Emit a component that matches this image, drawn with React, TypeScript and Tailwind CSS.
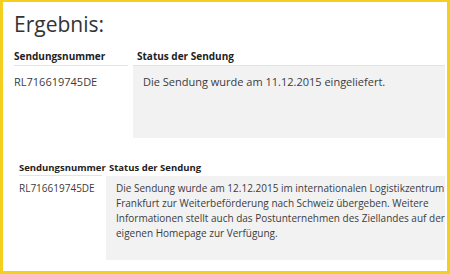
import { Fragment } from "react";

const RESULTS = [
  {
    nr: "RL716619745DE",
    status: "Die Sendung wurde am 11.12.2015 eingeliefert.",
  },
];

// Zeilen wie auf der Seite umbrochen
const DETAIL_LINES = [
  "Die Sendung wurde am 12.12.2015 im internationalen Logistikzentrum",
  "Frankfurt zur Weiterbeförderung nach Schweiz übergeben. Weitere",
  "Informationen stellt auch das Postunternehmen des Ziellandes auf der",
  "eigenen Homepage zur Verfügung.",
];

export default function App() {
  return (
    <div className="w-[450px] h-[274px] bg-[#f5cf1f] pt-[2px] pl-[3px] pr-[3px] pb-[3px]">
      <div className="h-full bg-white font-['Open_Sans',sans-serif] text-[#3c3c3c]">
        {/* erste Abfrage */}
        <div className="pl-[11px] pr-[2px] pt-[10px]">
          <h1 className="text-[21px] leading-[24px] text-[#333]">Ergebnis:</h1>
          <div className="mt-[13px] grid grid-cols-[114px_312px] gap-x-[5px]">
            <div className="border-b border-[#e4e4e4] pb-[2px] text-[10px] leading-[14px] font-bold text-[#222]">
              Sendungsnummer
            </div>
            <div className="border-b border-[#e4e4e4] pb-[2px] pl-[4px] text-[10px] leading-[14px] font-bold text-[#222]">
              Status der Sendung
            </div>
            {RESULTS.map((r) => (
              <Fragment key={r.nr}>
                <div className="pt-[8px] text-[11px] leading-[16px]">{r.nr}</div>
                <div className="h-[72px] bg-[#f2f2f2] pl-[10px] pt-[8px] text-[11px] leading-[16px]">
                  {r.status}
                </div>
              </Fragment>
            ))}
          </div>
        </div>

        {/* zweite Abfrage */}
        <div className="mt-[23px] pl-[16px] pr-[2px]">
          <div className="grid grid-cols-[83px_339px] gap-x-[4px]">
            <div className="border-b border-[#e4e4e4] pb-[1px] text-[9.5px] leading-[13px] font-bold text-[#222]">
              Sendungsnummer
            </div>
            <div className="pb-[1px] pl-[3px] text-[9.5px] leading-[13px] font-bold text-[#222]">
              Status der Sendung
            </div>
            <div className="pt-[5px] text-[10px] leading-[15px]">RL716619745DE</div>
            <div className="h-[84px] bg-[#f2f2f2] pl-[10px] pt-[5px] text-[10px] leading-[15px]">
              {DETAIL_LINES.map((line) => (
                <div key={line} className="whitespace-nowrap">
                  {line}
                </div>
              ))}
            </div>
          </div>
        </div>
      </div>
    </div>
  );
}
